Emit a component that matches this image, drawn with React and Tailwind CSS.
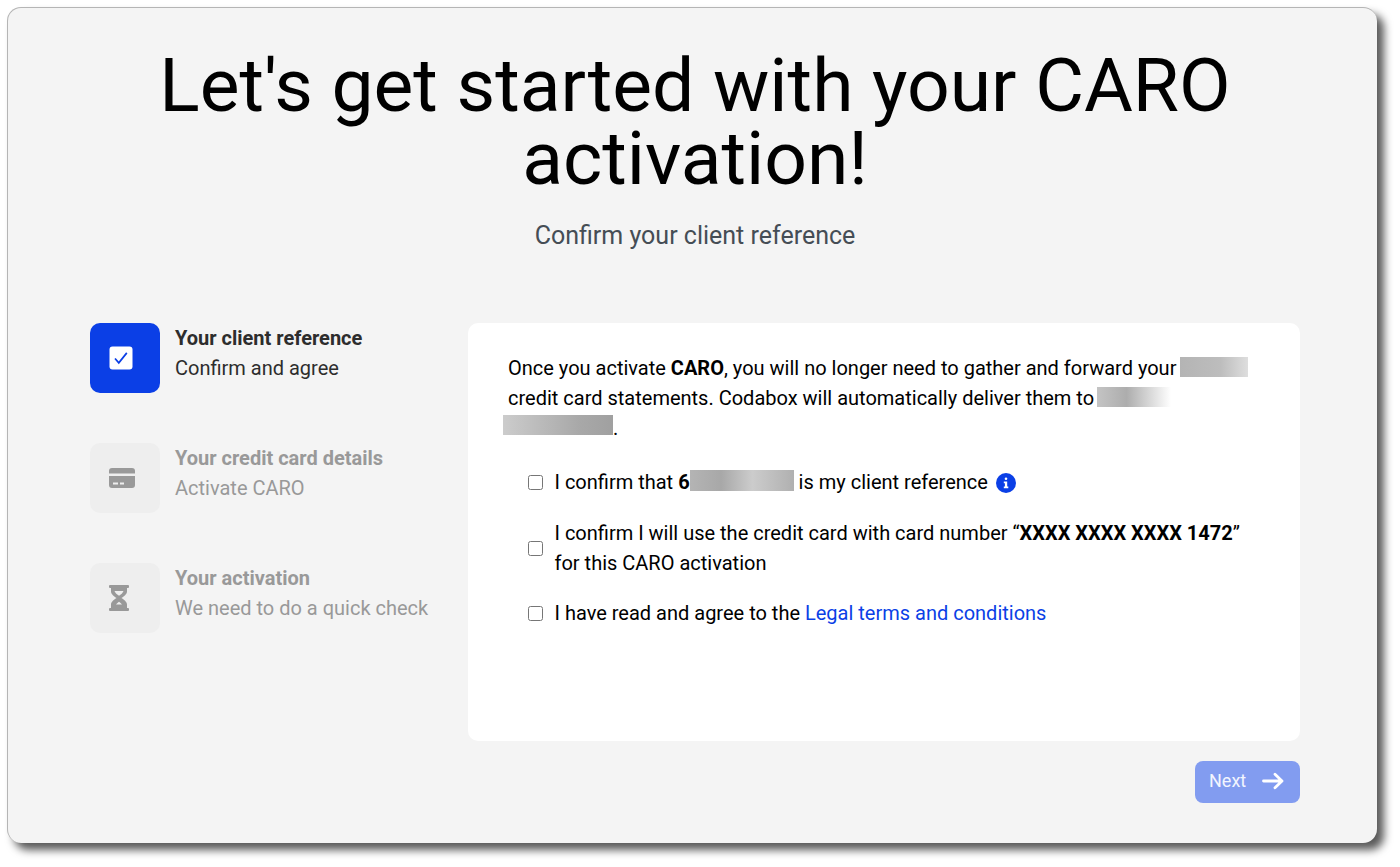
const font = { fontFamily: "Roboto, sans-serif" };

function Blur({ className }) {
  return <span className={`inline-block ${className}`} />;
}

function CheckIcon() {
  return (
    <svg width="24" height="24" viewBox="0 0 24 24">
      <rect x="0.5" y="0.5" width="23" height="23" rx="3" fill="#fff" />
      <path d="M6 12.500l3.800 4.400 8-10" fill="none" stroke="#0b3fe6" strokeWidth="1.700" />
    </svg>
  );
}

function CardIcon() {
  return (
    <svg width="26" height="20" viewBox="0 0 26 20" fill="#999999">
      <path d="M0 3a3 3 0 0 1 3-3h20a3 3 0 0 1 3 3v2.500H0z" />
      <path fillRule="evenodd" d="M0 8h26v9a3 3 0 0 1-3 3H3a3 3 0 0 1-3-3zm4 6.500v2h5v-2zm7 0v2h4v-2z" />
    </svg>
  );
}

function HourglassIcon() {
  return (
    <svg width="20" height="26" viewBox="0 0 20 26" fill="#999999">
      <rect x="0" y="0" width="20" height="3" rx="1" />
      <rect x="0" y="23" width="20" height="3" rx="1" />
      <path d="M2 3h16v3.500c0 2.600-3.200 5-5.600 6.500 2.400 1.500 5.600 3.900 5.600 6.500V23H2v-3.500C2 16.900 5.200 14.500 7.600 13 5.200 11.500 2 9.100 2 6.500z" />
      <path d="M5.500 6h9c-.5 1.800-2.700 3.700-4.500 4.800C8.200 9.700 6 7.800 5.500 6z" fill="#eeeeee" />
      <path d="M7 19.500c.8-1 2-2 3-2.700 1 .7 2.200 1.700 3 2.700z" fill="#eeeeee" />
    </svg>
  );
}

function Step({ icon, title, text, active }) {
  return (
    <div className="flex gap-[15px]">
      <div className={`w-[70px] h-[70px] rounded-[10px] flex items-center pl-[19px] ${active ? "bg-[#0b3fe6]" : "bg-[#eeeeee]"}`}>
        {icon}
      </div>
      <div className={`text-[20px] leading-[30px] ${active ? "text-[#2d2d2d]" : "text-[#999999]"}`}>
        <div className="font-bold">{title}</div>
        <div>{text}</div>
      </div>
    </div>
  );
}

function CheckRow({ children, className = "" }) {
  return (
    <label className={`flex items-center gap-[11.500px] text-[20px] leading-[30px] text-black ${className}`}>
      <input type="checkbox" className="w-[15px] h-[15px] shrink-0" />
      <span>{children}</span>
    </label>
  );
}

export default function App() {
  return (
    <div className="w-[1400px] h-[867px] bg-white pt-[7px] pl-[7px] overflow-hidden" style={font}>
      <div className="w-[1370px] h-[836px] bg-[#f4f4f4] rounded-[14px] border-t border-l border-[#b5b5b5] shadow-[7px_7px_8px_rgba(0,0,0,0.65)] pl-[82px] pr-[77px] pt-[41px]">
        <h1 className="text-[75px] leading-[73px] text-black text-center font-normal">
          Let's get started with your CARO activation!
        </h1>
        <p className="text-[25px] leading-[36px] text-[#454d55] text-center mt-[23px]">Confirm your client reference</p>

        <div className="flex mt-[69px]">
          <div className="w-[378px] flex flex-col gap-[50px]">
            <Step active icon={<CheckIcon />} title="Your client reference" text="Confirm and agree" />
            <Step icon={<CardIcon />} title="Your credit card details" text="Activate CARO" />
            <Step icon={<HourglassIcon />} title="Your activation" text="We need to do a quick check" />
          </div>

          <div className="w-[832px] h-[418px] bg-white rounded-[10px] pt-[30px] pl-[40px] pr-[40px]">
            <div className="text-[20px] text-black">
              <div className="h-[30px] leading-[30px]">
                Once you activate <b>CARO</b>, you will no longer need to gather and forward your{" "}
                <Blur className="w-[68px] h-[20px] -ml-px align-[-2px] bg-[linear-gradient(90deg,#b4b4b4,#bdbdbd_60%,#dedede)]" />
              </div>
              <div className="h-[30px] leading-[30px]">
                credit card statements. Codabox will automatically deliver them to{" "}
                <Blur className="w-[74px] h-[20px] -ml-[2px] align-[-2px] bg-[linear-gradient(90deg,#c4c4c4,#adadad_40%,#ffffff)]" />
              </div>
              <div className="h-[30px] leading-[30px]">
                <Blur className="w-[110px] h-[20px] -ml-[5px] align-[0px] bg-[linear-gradient(90deg,#cccccc,#a8a8a8_70%,#a0a0a0)]" />.
              </div>
            </div>

            <div className="mt-[24px] pl-[20px] flex flex-col gap-5">
              <CheckRow className="mb-px">
                I confirm that <b>6</b>
                <Blur className="w-[104px] h-[21px] align-[-2px] bg-[linear-gradient(90deg,#b4b4b4,#a8a8a8_30%,#cccccc_60%,#b0b0b0)]" />{" "}
                is my client reference{" "}
                <svg className="inline-block align-middle ml-[3px] -mt-[1px]" width="20" height="20" viewBox="0 0 20 20">
                  <circle cx="10" cy="10" r="10" fill="#0b3fe6" />
                  <rect x="8.700" y="4.500" width="2.600" height="2.600" rx="1.300" fill="#fff" />
                  <path d="M7.800 8.600h3.400v5h1.100v1.600H7.800v-1.600h1.100v-3.400H7.800z" fill="#fff" />
                </svg>
              </CheckRow>
              <CheckRow>
                I confirm I will use the credit card with card number “<b>XXXX XXXX XXXX 1472</b>”
                <br />
                for this CARO activation
              </CheckRow>
              <CheckRow>
                I have read and agree to the <span className="text-[#0b3fe6]">Legal terms and conditions</span>
              </CheckRow>
            </div>
          </div>
        </div>

        <div className="flex justify-end mt-5">
          <button className="w-[105px] h-[42px] rounded-[8px] bg-[#829cf0] text-[18px] leading-[40px] text-white/90 flex items-start pl-[14px] gap-[16px]">
            Next
            <svg className="mt-[11px]" width="22" height="18" viewBox="0 0 22 18" fill="none" stroke="#fff" strokeWidth="2.800" strokeLinecap="round" strokeLinejoin="round">
              <path d="M1.500 9h18M13 2.200L20 9l-7 6.800" />
            </svg>
          </button>
        </div>
      </div>
    </div>
  );
}
